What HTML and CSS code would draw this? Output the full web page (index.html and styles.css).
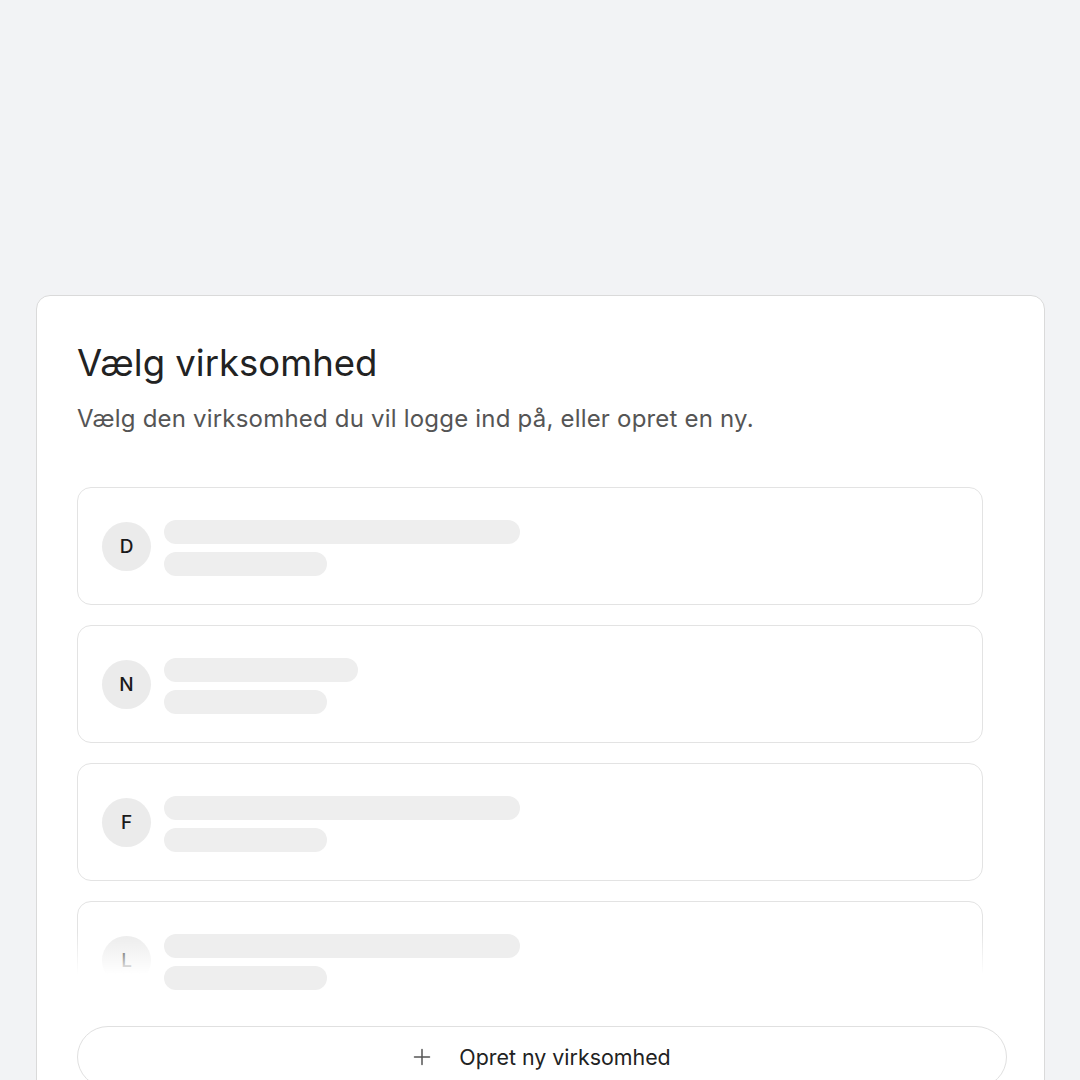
FILE: index.html
```html
<!DOCTYPE html>
<html lang="da">
<head>
  <meta charset="UTF-8">
  <meta name="viewport" content="width=device-width, initial-scale=1.0">
  <title>Vælg virksomhed</title>
  <link rel="stylesheet" href="styles.css">
</head>
<body>
  <div class="card">
    <h1>Vælg virksomhed</h1>
    <p class="subtitle">Vælg den virksomhed du vil logge ind på, eller opret en ny.</p>

    <div class="list">
      <div class="item">
        <div class="avatar">D</div>
        <div class="lines">
          <div class="bar long"></div>
          <div class="bar short"></div>
        </div>
      </div>
      <div class="item">
        <div class="avatar">N</div>
        <div class="lines">
          <div class="bar mid"></div>
          <div class="bar short"></div>
        </div>
      </div>
      <div class="item">
        <div class="avatar">F</div>
        <div class="lines">
          <div class="bar long"></div>
          <div class="bar short"></div>
        </div>
      </div>
      <div class="item">
        <div class="avatar">L</div>
        <div class="lines">
          <div class="bar long"></div>
          <div class="bar short"></div>
        </div>
      </div>
    </div>

    <button class="create">
      <svg width="18" height="18" viewBox="0 0 18 18" fill="none" stroke="#555" stroke-width="1.5" stroke-linecap="round">
        <path d="M9 1.5v15M1.5 9h15"/>
      </svg>
      <span>Opret ny virksomhed</span>
    </button>
  </div>
</body>
</html>
```

FILE: styles.css
```css
body {
  margin: 0;
  padding: 295px 35px 0 36px;
  background-color: #f2f3f5;
  font-family: Inter, "Noto Sans", sans-serif;
  color: #1f1f1f;
  height: 1080px;
  box-sizing: border-box;
  overflow: hidden;
}
.card {
  background-color: #fff;
  border: 1px solid #dadada;
  border-radius: 14px;
  padding: 45px 37px 40px 40px;
  min-height: 900px;
}
h1 {
  margin: 0;
  font-size: 36.5px;
  font-weight: 400;
  line-height: 44px;
  color: #222;
}
.subtitle {
  margin: 18px 0 0;
  font-size: 24px;
  letter-spacing: 0.2px;
  line-height: 32px;
  color: #555;
}
.list {
  position: relative;
  margin-top: 52px;
  padding-right: 24px;
  height: 510px;
  overflow: hidden;
  display: flex;
  flex-direction: column;
  gap: 20px;
}
/* fade on the last visible row */
.list::after {
  content: "";
  position: absolute;
  left: 0;
  right: 0;
  bottom: 0;
  height: 65px;
  background: linear-gradient(to bottom, rgba(255, 255, 255, 0), #fff 65%);
  z-index: 1;
}
.item {
  flex: none;
  height: 116px;
  border: 1px solid #e3e3e3;
  border-radius: 14px;
  display: flex;
  align-items: center;
  gap: 13px;
  padding: 0 24px;
}
.avatar {
  width: 49px;
  height: 49px;
  border-radius: 50%;
  background-color: #ebebeb;
  display: flex;
  align-items: center;
  justify-content: center;
  font-size: 19px;
  font-weight: 500;
  color: #1a1a1a;
  flex: none;
}
.lines {
  position: relative;
  z-index: 2;
  display: flex;
  flex-direction: column;
  gap: 8px;
  margin-top: 3px;
}
.bar {
  height: 24px;
  border-radius: 12px;
  background-color: #eeeeee;
}
.bar.long {
  width: 356px;
}
.bar.mid {
  width: 194px;
}
.bar.short {
  width: 163px;
}
.create {
  margin-top: 29px;
  width: 100%;
  height: 62px;
  background-color: #fff;
  border: 1px solid #e0e0e0;
  border-radius: 31px;
  display: flex;
  align-items: center;
  justify-content: center;
  gap: 28px;
  font-family: inherit;
  font-size: 21.4px;
  color: #222;
  cursor: pointer;
}
```
